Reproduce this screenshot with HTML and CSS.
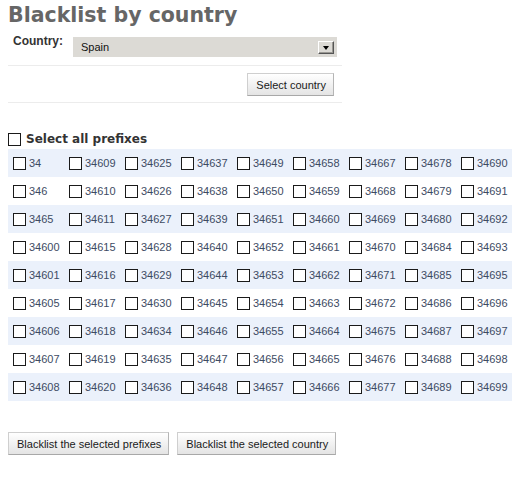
FILE: index.html
```html
<!DOCTYPE html>
<html>
<head>
<meta charset="utf-8">
<title>Blacklist by country</title>
<link rel="stylesheet" href="styles.css">
</head>
<body>
<div class="page">
  <h1 class="title">Blacklist by country</h1>
  <form class="country-form">
    <div class="form-row">
      <label class="label">Country:</label>
      <span class="select-wrap">
        <select class="select"><option>Spain</option></select>
        <span class="select-arrow"></span>
      </span>
    </div>
    <div class="form-actions">
      <button type="button" class="btn">Select country</button>
    </div>
  </form>

  <label class="select-all"><input type="checkbox" class="cb"><span>Select all prefixes</span></label>

  <table class="prefixes">
    <tr class="odd">
      <td><label class="cell"><input type="checkbox" class="cb"><span>34</span></label></td>
      <td><label class="cell"><input type="checkbox" class="cb"><span>34609</span></label></td>
      <td><label class="cell"><input type="checkbox" class="cb"><span>34625</span></label></td>
      <td><label class="cell"><input type="checkbox" class="cb"><span>34637</span></label></td>
      <td><label class="cell"><input type="checkbox" class="cb"><span>34649</span></label></td>
      <td><label class="cell"><input type="checkbox" class="cb"><span>34658</span></label></td>
      <td><label class="cell"><input type="checkbox" class="cb"><span>34667</span></label></td>
      <td><label class="cell"><input type="checkbox" class="cb"><span>34678</span></label></td>
      <td><label class="cell"><input type="checkbox" class="cb"><span>34690</span></label></td>
    </tr>
    <tr>
      <td><label class="cell"><input type="checkbox" class="cb"><span>346</span></label></td>
      <td><label class="cell"><input type="checkbox" class="cb"><span>34610</span></label></td>
      <td><label class="cell"><input type="checkbox" class="cb"><span>34626</span></label></td>
      <td><label class="cell"><input type="checkbox" class="cb"><span>34638</span></label></td>
      <td><label class="cell"><input type="checkbox" class="cb"><span>34650</span></label></td>
      <td><label class="cell"><input type="checkbox" class="cb"><span>34659</span></label></td>
      <td><label class="cell"><input type="checkbox" class="cb"><span>34668</span></label></td>
      <td><label class="cell"><input type="checkbox" class="cb"><span>34679</span></label></td>
      <td><label class="cell"><input type="checkbox" class="cb"><span>34691</span></label></td>
    </tr>
    <tr class="odd">
      <td><label class="cell"><input type="checkbox" class="cb"><span>3465</span></label></td>
      <td><label class="cell"><input type="checkbox" class="cb"><span>34611</span></label></td>
      <td><label class="cell"><input type="checkbox" class="cb"><span>34627</span></label></td>
      <td><label class="cell"><input type="checkbox" class="cb"><span>34639</span></label></td>
      <td><label class="cell"><input type="checkbox" class="cb"><span>34651</span></label></td>
      <td><label class="cell"><input type="checkbox" class="cb"><span>34660</span></label></td>
      <td><label class="cell"><input type="checkbox" class="cb"><span>34669</span></label></td>
      <td><label class="cell"><input type="checkbox" class="cb"><span>34680</span></label></td>
      <td><label class="cell"><input type="checkbox" class="cb"><span>34692</span></label></td>
    </tr>
    <tr>
      <td><label class="cell"><input type="checkbox" class="cb"><span>34600</span></label></td>
      <td><label class="cell"><input type="checkbox" class="cb"><span>34615</span></label></td>
      <td><label class="cell"><input type="checkbox" class="cb"><span>34628</span></label></td>
      <td><label class="cell"><input type="checkbox" class="cb"><span>34640</span></label></td>
      <td><label class="cell"><input type="checkbox" class="cb"><span>34652</span></label></td>
      <td><label class="cell"><input type="checkbox" class="cb"><span>34661</span></label></td>
      <td><label class="cell"><input type="checkbox" class="cb"><span>34670</span></label></td>
      <td><label class="cell"><input type="checkbox" class="cb"><span>34684</span></label></td>
      <td><label class="cell"><input type="checkbox" class="cb"><span>34693</span></label></td>
    </tr>
    <tr class="odd">
      <td><label class="cell"><input type="checkbox" class="cb"><span>34601</span></label></td>
      <td><label class="cell"><input type="checkbox" class="cb"><span>34616</span></label></td>
      <td><label class="cell"><input type="checkbox" class="cb"><span>34629</span></label></td>
      <td><label class="cell"><input type="checkbox" class="cb"><span>34644</span></label></td>
      <td><label class="cell"><input type="checkbox" class="cb"><span>34653</span></label></td>
      <td><label class="cell"><input type="checkbox" class="cb"><span>34662</span></label></td>
      <td><label class="cell"><input type="checkbox" class="cb"><span>34671</span></label></td>
      <td><label class="cell"><input type="checkbox" class="cb"><span>34685</span></label></td>
      <td><label class="cell"><input type="checkbox" class="cb"><span>34695</span></label></td>
    </tr>
    <tr>
      <td><label class="cell"><input type="checkbox" class="cb"><span>34605</span></label></td>
      <td><label class="cell"><input type="checkbox" class="cb"><span>34617</span></label></td>
      <td><label class="cell"><input type="checkbox" class="cb"><span>34630</span></label></td>
      <td><label class="cell"><input type="checkbox" class="cb"><span>34645</span></label></td>
      <td><label class="cell"><input type="checkbox" class="cb"><span>34654</span></label></td>
      <td><label class="cell"><input type="checkbox" class="cb"><span>34663</span></label></td>
      <td><label class="cell"><input type="checkbox" class="cb"><span>34672</span></label></td>
      <td><label class="cell"><input type="checkbox" class="cb"><span>34686</span></label></td>
      <td><label class="cell"><input type="checkbox" class="cb"><span>34696</span></label></td>
    </tr>
    <tr class="odd">
      <td><label class="cell"><input type="checkbox" class="cb"><span>34606</span></label></td>
      <td><label class="cell"><input type="checkbox" class="cb"><span>34618</span></label></td>
      <td><label class="cell"><input type="checkbox" class="cb"><span>34634</span></label></td>
      <td><label class="cell"><input type="checkbox" class="cb"><span>34646</span></label></td>
      <td><label class="cell"><input type="checkbox" class="cb"><span>34655</span></label></td>
      <td><label class="cell"><input type="checkbox" class="cb"><span>34664</span></label></td>
      <td><label class="cell"><input type="checkbox" class="cb"><span>34675</span></label></td>
      <td><label class="cell"><input type="checkbox" class="cb"><span>34687</span></label></td>
      <td><label class="cell"><input type="checkbox" class="cb"><span>34697</span></label></td>
    </tr>
    <tr>
      <td><label class="cell"><input type="checkbox" class="cb"><span>34607</span></label></td>
      <td><label class="cell"><input type="checkbox" class="cb"><span>34619</span></label></td>
      <td><label class="cell"><input type="checkbox" class="cb"><span>34635</span></label></td>
      <td><label class="cell"><input type="checkbox" class="cb"><span>34647</span></label></td>
      <td><label class="cell"><input type="checkbox" class="cb"><span>34656</span></label></td>
      <td><label class="cell"><input type="checkbox" class="cb"><span>34665</span></label></td>
      <td><label class="cell"><input type="checkbox" class="cb"><span>34676</span></label></td>
      <td><label class="cell"><input type="checkbox" class="cb"><span>34688</span></label></td>
      <td><label class="cell"><input type="checkbox" class="cb"><span>34698</span></label></td>
    </tr>
    <tr class="odd">
      <td><label class="cell"><input type="checkbox" class="cb"><span>34608</span></label></td>
      <td><label class="cell"><input type="checkbox" class="cb"><span>34620</span></label></td>
      <td><label class="cell"><input type="checkbox" class="cb"><span>34636</span></label></td>
      <td><label class="cell"><input type="checkbox" class="cb"><span>34648</span></label></td>
      <td><label class="cell"><input type="checkbox" class="cb"><span>34657</span></label></td>
      <td><label class="cell"><input type="checkbox" class="cb"><span>34666</span></label></td>
      <td><label class="cell"><input type="checkbox" class="cb"><span>34677</span></label></td>
      <td><label class="cell"><input type="checkbox" class="cb"><span>34689</span></label></td>
      <td><label class="cell"><input type="checkbox" class="cb"><span>34699</span></label></td>
    </tr>
  </table>

  <div class="actions">
    <button type="button" class="btn">Blacklist the selected prefixes</button>
    <button type="button" class="btn">Blacklist the selected country</button>
  </div>
</div>
</body>
</html>
```

FILE: styles.css
```css
html, body {
  margin: 0;
  padding: 0;
  background: #ffffff;
}

.page {
  padding: 3px 8px 4px 8px;
  font-family: "Liberation Sans", Arial, sans-serif;
  font-size: 11px;
  color: #333333;
}

.title {
  margin: 0;
  font-family: "DejaVu Sans", sans-serif;
  font-weight: bold;
  font-size: 20.5px;
  line-height: 24px;
  color: #666666;
}

.country-form {
  margin: 7px 0 0 0;
  width: 334px;
}

.form-row {
  display: flex;
  align-items: flex-start;
  padding: 0 0 8px 5px;
  border-bottom: 1px solid #ececec;
}

.label {
  flex: none;
  width: 60px;
  font-weight: bold;
  font-size: 12px;
  line-height: 14px;
  color: #333333;
}

.select-wrap {
  position: relative;
  display: block;
  flex: none;
  margin-top: 3px;
  width: 264px;
  height: 20px;
}

.select {
  appearance: none;
  -webkit-appearance: none;
  display: block;
  width: 264px;
  height: 20px;
  margin: 0;
  padding: 0 0 0 8px;
  border: none;
  border-radius: 0;
  background: #dcdad5;
  font-family: "Liberation Sans", Arial, sans-serif;
  font-size: 11px;
  color: #111111;
  outline: none;
}

.select-arrow {
  position: absolute;
  right: 3px;
  top: 4px;
  width: 14px;
  height: 11px;
  background: #dcdad5;
  border-top: 1px solid #ffffff;
  border-left: 1px solid #ffffff;
  border-right: 1px solid #555555;
  border-bottom: 1px solid #555555;
  box-shadow: inset -1px -1px 0 #9a9893;
}

.select-arrow::after {
  content: "";
  position: absolute;
  left: 4px;
  top: 4px;
  width: 0;
  height: 0;
  border-left: 3px solid transparent;
  border-right: 3px solid transparent;
  border-top: 4px solid #000000;
}

.form-actions {
  display: flex;
  justify-content: flex-end;
  padding: 7px 8px 6px 0;
  border-bottom: 1px solid #ececec;
}

.btn {
  height: 23px;
  margin: 0;
  padding: 0 7px 0 8px;
  font-family: "Liberation Sans", Arial, sans-serif;
  font-size: 11px;
  color: #1a1a1a;
  background: linear-gradient(#ffffff, #e4e4e4);
  border: 1px solid #cfcfcf;
  border-right-color: #b5b5b5;
  border-bottom-color: #a8a8a8;
  border-radius: 0;
  cursor: pointer;
}

.cb {
  appearance: none;
  -webkit-appearance: none;
  flex: none;
  width: 13px;
  height: 13px;
  margin: 0;
  border: 1px solid #1a1a1a;
  border-radius: 0;
  background: #ffffff;
}

.select-all {
  display: flex;
  align-items: center;
  gap: 5px;
  height: 16px;
  margin-top: 28px;
  font-family: "DejaVu Sans", sans-serif;
  font-weight: bold;
  font-size: 12px;
  color: #333333;
}

.prefixes {
  margin-top: 2px;
  width: 504px;
  border-collapse: collapse;
  border-spacing: 0;
}

.prefixes td {
  width: 56px;
  height: 28px;
  padding: 0;
}

.prefixes tr.odd td {
  background: #ebf1fb;
}

.cell {
  display: flex;
  align-items: center;
  gap: 3px;
  padding-left: 5px;
  font-size: 11px;
  color: #3d4b63;
}

.actions {
  display: flex;
  gap: 8px;
  margin-top: 31px;
}
```
